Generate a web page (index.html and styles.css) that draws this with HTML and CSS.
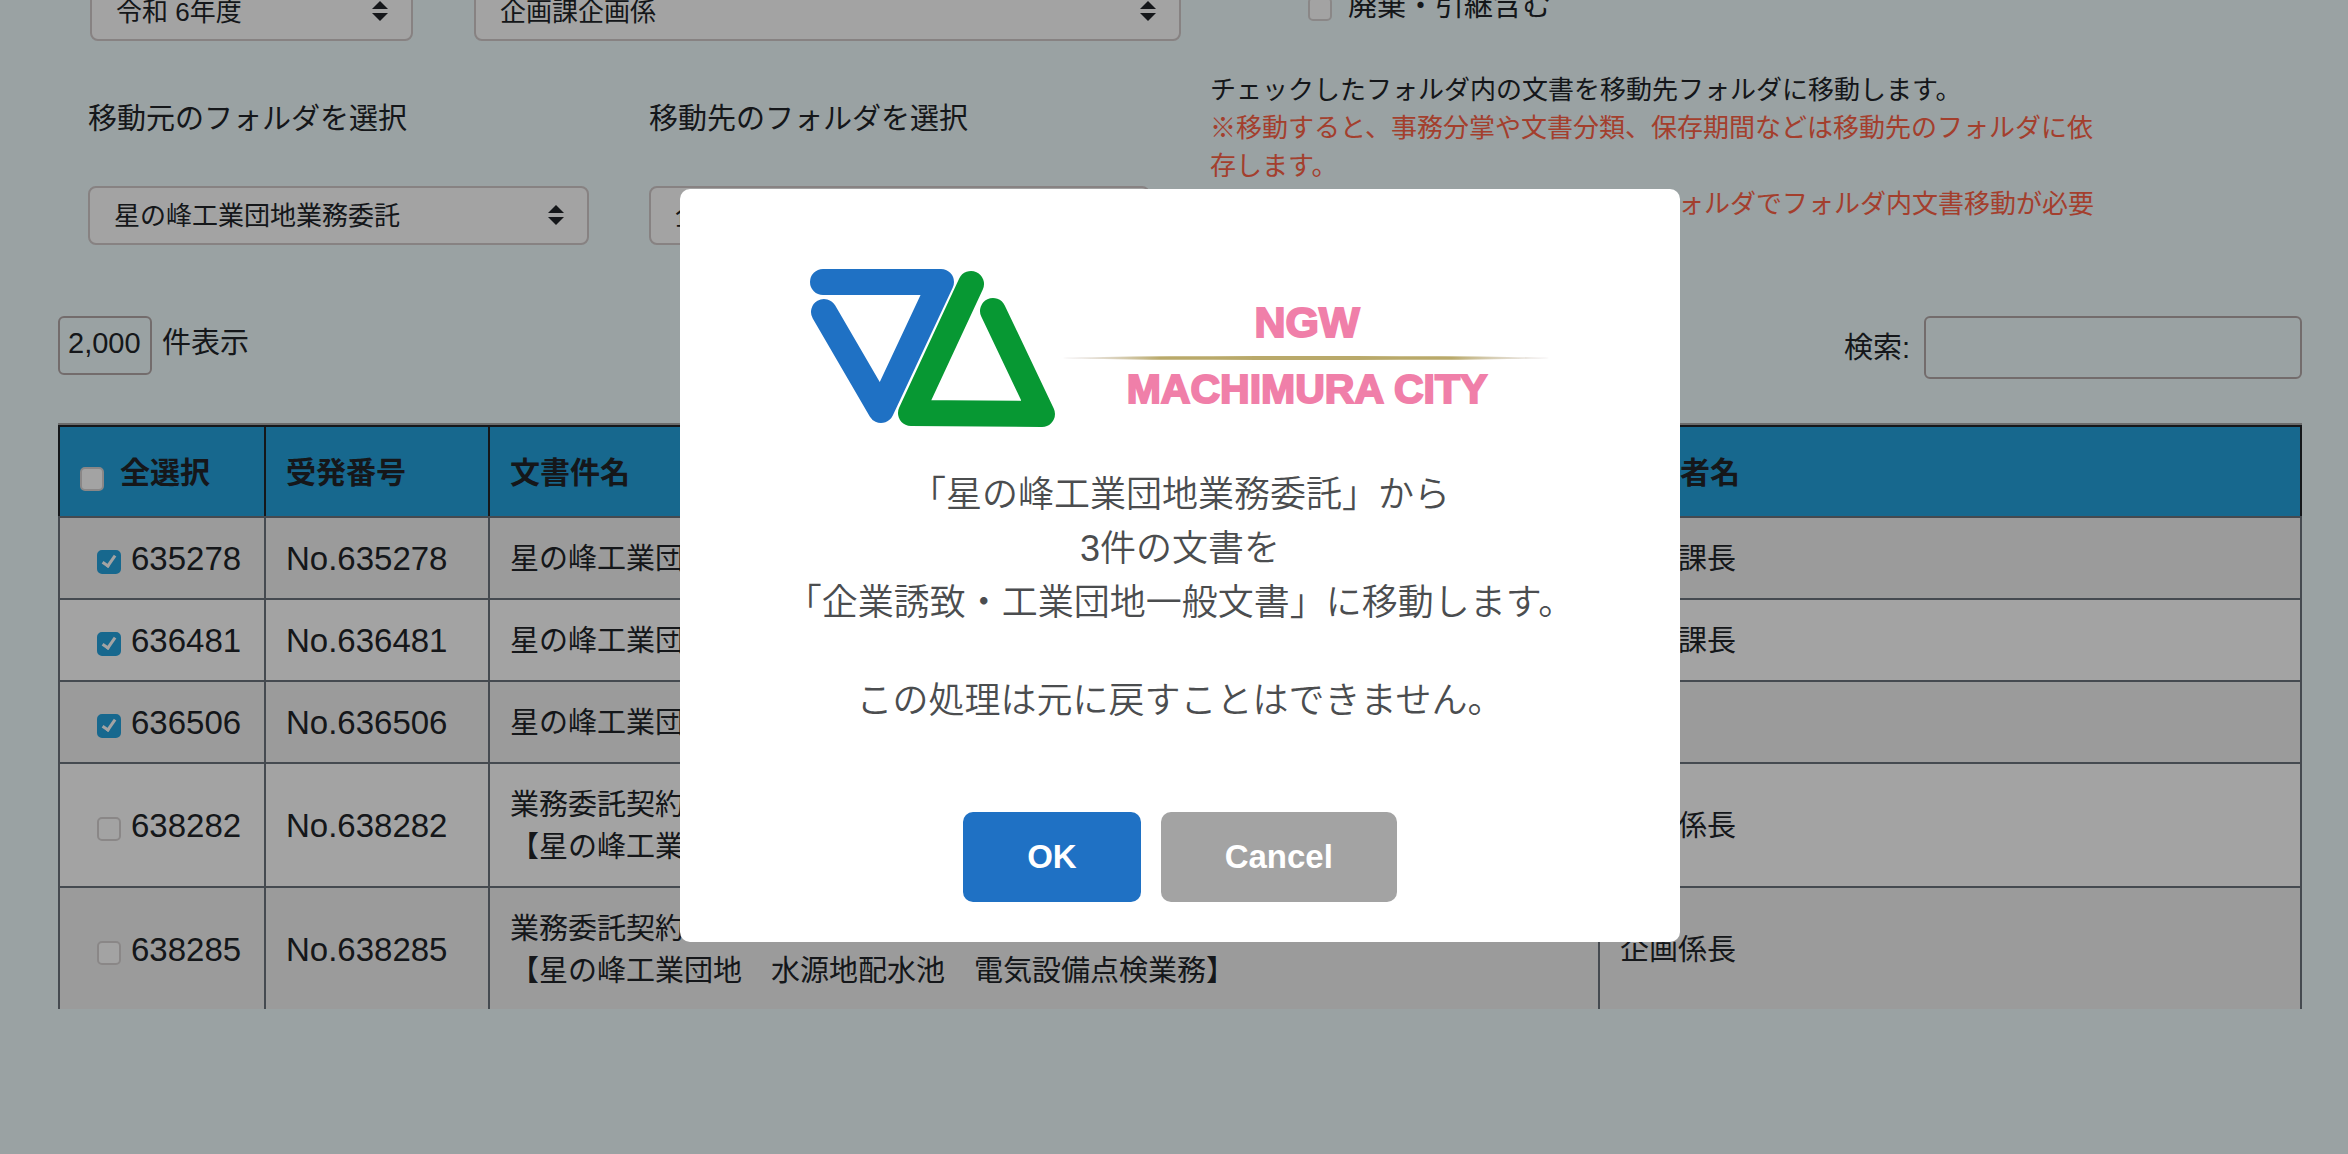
FILE: index.html
```
<!DOCTYPE html>
<html lang="ja">

<head>
    <meta charset="UTF-8">
    <meta name="viewport" content="width=device-width, initial-scale=1.0">
    <title>フォルダ内文書移動</title>
    <link rel="stylesheet" href="styles.css">
</head>

<body>
    <main class="page">
        <div class="filters">
            <div class="select-box">
                <select class="select" aria-label="年度">
                    <option>令和 6年度</option>
                </select>
                <svg class="select-arrows" viewBox="0 0 16 20"><path d="M8 0l8 8H0zM8 20l8-8H0z"/></svg>
            </div>
            <div class="select-box">
                <select class="select" aria-label="所属">
                    <option>企画課企画係</option>
                </select>
                <svg class="select-arrows" viewBox="0 0 16 20"><path d="M8 0l8 8H0zM8 20l8-8H0z"/></svg>
            </div>
            <label class="include-label">
                <input type="checkbox" class="check">
                廃棄・引継含む
            </label>
        </div>

        <div class="folders">
            <div class="folder">
                <label class="folder-label" for="fromFolder">移動元のフォルダを選択</label>
                <div class="select-box">
                    <select class="select" id="fromFolder">
                        <option>星の峰工業団地業務委託</option>
                    </select>
                    <svg class="select-arrows" viewBox="0 0 16 20"><path d="M8 0l8 8H0zM8 20l8-8H0z"/></svg>
                </div>
            </div>
            <div class="folder">
                <label class="folder-label" for="toFolder">移動先のフォルダを選択</label>
                <div class="select-box">
                    <select class="select" id="toFolder">
                        <option>企業誘致・工業団地一般文書</option>
                    </select>
                    <svg class="select-arrows" viewBox="0 0 16 20"><path d="M8 0l8 8H0zM8 20l8-8H0z"/></svg>
                </div>
            </div>
            <div class="notes">
                <p>チェックしたフォルダ内の文書を移動先フォルダに移動します。</p>
                <p class="warning">※移動すると、事務分掌や文書分類、保存期間などは移動先のフォルダに依存します。</p>
                <p class="warning">※複数のフォルダから移動する場合はフォルダでフォルダ内文書移動が必要です。</p>
            </div>
        </div>

        <div class="toolbar">
            <label class="length">
                <select class="length-select">
                    <option>2,000</option>
                </select>
                件表示
            </label>
            <label class="search">
                検索:
                <input type="search" class="search-input">
            </label>
        </div>

        <div class="table-scroll">
            <table class="docs">
                <colgroup>
                    <col class="col-id">
                    <col class="col-no">
                    <col class="col-title">
                    <col class="col-person">
                </colgroup>
                <thead>
                    <tr>
                        <th><label class="check-all"><input type="checkbox" class="check">全選択</label></th>
                        <th>受発番号</th>
                        <th>文書件名</th>
                        <th>起案者名</th>
                    </tr>
                </thead>
                <tbody>
                    <tr>
                        <td><label class="doc-id"><input type="checkbox" class="check" checked>635278</label></td>
                        <td class="doc-no">No.635278</td>
                        <td>星の峰工業団地業務委託</td>
                        <td>企画課長</td>
                    </tr>
                    <tr>
                        <td><label class="doc-id"><input type="checkbox" class="check" checked>636481</label></td>
                        <td class="doc-no">No.636481</td>
                        <td>星の峰工業団地業務委託</td>
                        <td>企画課長</td>
                    </tr>
                    <tr>
                        <td><label class="doc-id"><input type="checkbox" class="check" checked>636506</label></td>
                        <td class="doc-no">No.636506</td>
                        <td>星の峰工業団地業務委託</td>
                        <td></td>
                    </tr>
                    <tr>
                        <td><label class="doc-id"><input type="checkbox" class="check">638282</label></td>
                        <td class="doc-no">No.638282</td>
                        <td>業務委託契約<br>【星の峰工業団地】</td>
                        <td>企画係長</td>
                    </tr>
                    <tr>
                        <td><label class="doc-id"><input type="checkbox" class="check">638285</label></td>
                        <td class="doc-no">No.638285</td>
                        <td>業務委託契約<br>【星の峰工業団地　水源地配水池　電気設備点検業務】</td>
                        <td>企画係長</td>
                    </tr>
                </tbody>
            </table>
        </div>
    </main>

    <div class="overlay">
        <div class="modal" role="dialog" aria-modal="true">
            <svg class="logo" viewBox="0 0 742 158" role="img" aria-label="NGW MACHIMURA CITY">
                <defs>
                    <linearGradient id="rule">
                        <stop offset="0" stop-color="#d8cfd0" stop-opacity="0.3"/>
                        <stop offset="0.2" stop-color="#b9a96a"/>
                        <stop offset="0.8" stop-color="#b9a96a"/>
                        <stop offset="1" stop-color="#d8cfd0" stop-opacity="0.3"/>
                    </linearGradient>
                </defs>
                <g fill="none" stroke-width="26" stroke-linecap="round" stroke-linejoin="round">
                    <path stroke="#1f71c4" d="M14 13H132L72 141L15 43"/>
                    <path stroke="#079833" d="M162 15L102 144L233 145L184 42"/>
                </g>
                <ellipse cx="497" cy="89" rx="243" ry="2" fill="url(#rule)"/>
                <text class="logo-top" x="498" y="68">NGW</text>
                <text class="logo-bottom" x="498" y="134">MACHIMURA CITY</text>
            </svg>
            <p class="message">「星の峰工業団地業務委託」から<br>3件の文書を<br>「企業誘致・工業団地一般文書」に移動します。</p>
            <p class="message">この処理は元に戻すことはできません。</p>
            <div class="actions">
                <button type="button" class="btn btn-ok">OK</button>
                <button type="button" class="btn btn-cancel">Cancel</button>
            </div>
        </div>
    </div>
</body>

</html>
```
FILE: styles.css
```
* {
    margin: 0;
    box-sizing: border-box;
}

body {
    background-color: #f1fdff;
    color: #212529;
    font-family: "Liberation Sans", "Noto Sans CJK JP", sans-serif;
    font-size: 29px;
    line-height: 42px;
    overflow: hidden;
}

input, select, button {
    font: inherit;
    color: inherit;
}

.page {
    margin-top: -18px;
    padding: 0 46px 0 58px;
}

/* selects */
.select-box {
    position: relative;
}

.select {
    display: block;
    appearance: none;
    width: 100%;
    height: 59px;
    padding: 0 60px 0 24px;
    font-size: 26px;
    background-color: white;
    border: 2px solid #d3cbcb;
    border-radius: 8px;
}

.select-arrows {
    position: absolute;
    top: 19px;
    right: 25px;
    width: 16px;
    height: 20px;
    fill: #212529;
}

.filters {
    display: grid;
    grid-template-columns: 323fr 707fr 1060fr;
    column-gap: 61px;
    padding-left: 32px;
}

.include-label {
    display: flex;
    align-items: center;
    gap: 16px;
    padding: 0 0 12px 66px;
}

/* checkboxes */
.check {
    appearance: none;
    flex: none;
    display: block;
    width: 24px;
    height: 24px;
    margin-top: 6px;
    background-color: white;
    border: 2px solid #d8d4d4;
    border-radius: 5px;
}

.check:checked {
    background-color: #25a3df;
    border-color: #25a3df;
}

.check:checked::after {
    content: "";
    display: block;
    width: 5px;
    height: 11px;
    margin: 1px 0 0 6px;
    border: solid white;
    border-width: 0 3px 3px 0;
    transform: rotate(35deg);
}

/* folders */
.folders {
    display: grid;
    grid-template-columns: 3fr 3fr 5fr 1fr;
    margin-top: 30px;
}

.folder {
    padding: 27px 30px 0;
}

.folder-label {
    display: block;
    margin-bottom: 46px;
}

.notes {
    padding-left: 30px;
    font-size: 26px;
    line-height: 38px;
}

.warning {
    color: tomato;
}

/* toolbar */
.toolbar {
    display: flex;
    justify-content: space-between;
    align-items: flex-start;
    margin-top: 55px;
}

.length {
    display: flex;
    align-items: baseline;
    gap: 10px;
}

.length-select {
    appearance: none;
    width: 94px;
    height: 59px;
    padding: 0 0 6px 8px;
    background: none;
    border: 2px solid #b5a9a9;
    border-radius: 6px;
}

.search {
    display: flex;
    align-items: center;
    gap: 14px;
}

.search-input {
    width: 378px;
    height: 63px;
    padding: 0 12px;
    background: none;
    border: 2px solid #b5a9a9;
    border-radius: 6px;
}

/* table */
.table-scroll {
    margin-top: 44px;
    max-height: calc(100vh - 568px);
    overflow: hidden;
    border-top: 2px solid #a8a8a8;
}

.docs {
    width: 100%;
    table-layout: fixed;
    border-collapse: collapse;
}

.col-id {
    width: 206px;
}

.col-no {
    width: 224px;
}

.col-person {
    width: 702px;
}

.docs th, .docs td {
    padding: 20px 20px 18px;
    text-align: left;
    border: 2px solid #6c757d;
}

.docs th {
    padding: 25px 20px 22px;
    font-size: 30px;
    color: #212529;
    background-color: #25a3df;
    border-color: #212529;
    border-bottom-color: #6c757d;
}

.docs td {
    background-color: white;
}

.docs tr:nth-child(odd) td {
    background-color: #f3f3f3;
}

.check-all {
    display: flex;
    align-items: center;
    gap: 16px;
}

.check-all .check {
    margin-top: 12px;
}

.doc-id {
    display: flex;
    align-items: center;
    gap: 10px;
    padding-left: 17px;
}

.doc-id, .doc-no {
    font-size: 33px;
}

/* modal */
.overlay {
    position: fixed;
    inset: 0;
    display: flex;
    align-items: center;
    justify-content: center;
    padding-bottom: 24px;
    background-color: rgba(0, 0, 0, 0.36);
}

.modal {
    width: 1000px;
    max-width: 100%;
    margin-left: 12px;
    padding: 80px 40px 40px;
    text-align: center;
    background-color: white;
    border-radius: 10px;
}

.logo {
    display: block;
    width: 742px;
    max-width: 100%;
    margin: 0 auto 41px;
}

.logo-top, .logo-bottom {
    font-weight: bold;
    font-size: 41px;
    text-anchor: middle;
    fill: #f07fa9;
    stroke: #f07fa9;
    stroke-width: 2px;
}

.logo-top {
    font-size: 43px;
}

.message {
    font-size: 36px;
    font-weight: 350;
    line-height: 54px;
    color: #4b4d4f;
}

.message + .message {
    margin-top: 44px;
}

.actions {
    display: flex;
    justify-content: center;
    gap: 20px;
    margin-top: 84px;
}

.btn {
    height: 90px;
    padding: 0 64px;
    font-size: 33px;
    font-weight: bold;
    color: white;
    border: none;
    border-radius: 10px;
    cursor: pointer;
}

.btn-ok {
    background-color: #1f71c4;
}

.btn-cancel {
    background-color: #a3a3a3;
}
```
